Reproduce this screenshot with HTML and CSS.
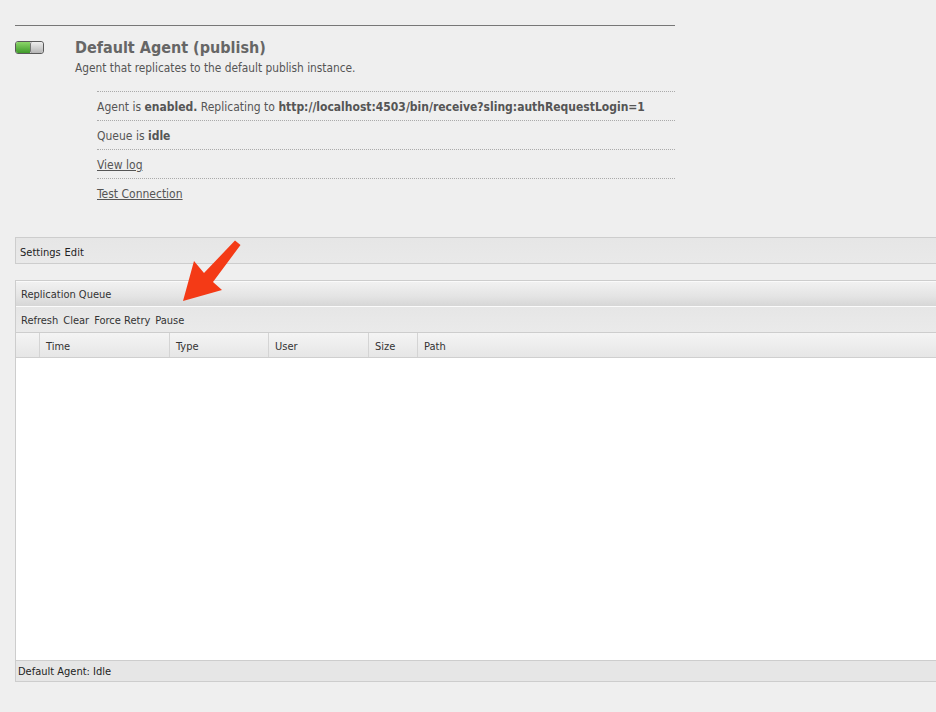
FILE: index.html
```html
<!DOCTYPE html>
<html>
<head>
<meta charset="utf-8">
<link rel="stylesheet" href="styles.css">
</head>
<body>
<div class="page">
  <section class="agent">
    <div class="agent-head">
      <span class="toggle"><span class="toggle-on"></span><span class="toggle-off"></span></span>
      <div class="agent-titles">
        <h1 class="agent-title">Default Agent (publish)</h1>
        <p class="agent-desc">Agent that replicates to the default publish instance.</p>
      </div>
    </div>
    <ul class="agent-info">
      <li>Agent is <b>enabled.</b> Replicating to <b>http://localhost:4503/bin/receive?sling:authRequestLogin=1</b></li>
      <li>Queue is <b>idle</b></li>
      <li><a href="#">View log</a></li>
      <li><a href="#">Test Connection</a></li>
    </ul>
  </section>

  <div class="panel settings">
    <span class="tb-item">Settings</span><span class="tb-item">Edit</span>
  </div>

  <div class="panel queue">
    <div class="queue-header">Replication Queue</div>
    <div class="queue-toolbar">
      <span class="tb-item">Refresh</span><span class="tb-item">Clear</span><span class="tb-item">Force Retry</span><span class="tb-item">Pause</span>
    </div>
    <div class="grid-head">
      <div class="col col-num"></div>
      <div class="col col-time">Time</div>
      <div class="col col-type">Type</div>
      <div class="col col-user">User</div>
      <div class="col col-size">Size</div>
      <div class="col col-path">Path</div>
    </div>
    <div class="grid-body"></div>
    <div class="status">Default Agent: Idle</div>
  </div>
</div>

<svg class="arrow" width="80" height="80" viewBox="170 230 80 80">
  <polygon points="235,240.5 240.5,245 213,282 222,290 183,301 194,261 204,273" fill="#f43a16"/>
</svg>
</body>
</html>
```

FILE: styles.css
```css
html, body {
  margin: 0;
  padding: 0;
  background: #efefef;
  overflow: hidden;
}

body {
  font-family: "DejaVu Sans Condensed", "DejaVu Sans", sans-serif;
  font-stretch: condensed;
  color: #555;
  width: 936px;
  height: 712px;
  position: relative;
}

.page {
  padding-top: 25px;
}

.agent {
  margin-left: 15px;
  width: 660px;
  border-top: 1px solid #777;
  padding-top: 11px;
}

.agent-head {
  display: flex;
  align-items: flex-start;
}

.toggle {
  display: flex;
  width: 27px;
  height: 11px;
  margin-top: 4px;
  border: 1px solid #5a5a5a;
  border-radius: 3px;
  overflow: hidden;
  flex: none;
}

.toggle-on {
  width: 14px;
  background: linear-gradient(#8cd66a, #3f9a2a);
}

.toggle-off {
  flex: 1;
  border-left: 1px solid #777;
  border-radius: 2px;
  background: linear-gradient(#eee, #b5b5b5);
}

.agent-titles {
  margin-left: 31px;
}

.agent-title {
  margin: 0;
  font-size: 16px;
  line-height: 22px;
  font-weight: bold;
  color: #666;
}

.agent-desc {
  margin: 0;
  font-size: 11.8px;
  line-height: 18px;
  color: #555;
}

.agent-info {
  list-style: none;
  margin: 14px 0 0 82px;
  padding: 0;
}

.agent-info li {
  border-top: 1px dotted #aaa;
  height: 28px;
  line-height: 30px;
  font-size: 12px;
  color: #555;
}

.agent-info li b {
  color: #555;
}

.agent-info a {
  color: #555;
  text-decoration: underline;
}

.panel {
  margin-left: 15px;
  margin-right: -20px;
  border: 1px solid #cdcdcd;
  border-right: none;
  font-size: 11px;
  color: #222;
}

.settings {
  margin-top: 30px;
  height: 25px;
  line-height: 30px;
  padding-left: 4px;
  background: linear-gradient(#e6e6e6, #e9e9e9);
}

.tb-item {
  margin-right: 4px;
}

.queue {
  margin-top: 16px;
}

.queue-header {
  height: 24px;
  line-height: 26px;
  padding-left: 5px;
  border-top: 1px solid #fafafa;
  background: linear-gradient(#f1f1f1, #e4e4e4 60%, #d6d6d6);
  color: #333;
}

.queue-toolbar {
  height: 25px;
  line-height: 28px;
  padding-left: 5px;
  border-top: 1px solid #fbfbfb;
  border-bottom: 1px solid #cdcdcd;
  background: linear-gradient(#e6e6e6, #eaeaea);
  color: #333;
}

.queue-toolbar .tb-item {
  margin-right: 5px;
}

.grid-head {
  display: flex;
  height: 24px;
  border-bottom: 1px solid #cfcfcf;
  background: linear-gradient(#f4f4f4, #e6e6e6);
}

.col {
  line-height: 28px;
  padding-left: 6px;
  border-left: 1px solid #d4d4d4;
  color: #333;
  box-sizing: border-box;
}

.col-num {
  width: 23px;
  border-left: none;
}

.col-time { width: 130px; }
.col-type { width: 99px; }
.col-user { width: 100px; }
.col-size { width: 49px; }
.col-path { flex: 1; }

.grid-body {
  height: 302px;
  background: #fff;
  border-bottom: 1px solid #cdcdcd;
}

.status {
  height: 20px;
  line-height: 22px;
  padding-left: 2px;
  background: #e6e6e6;
  color: #222;
}

.arrow {
  position: absolute;
  left: 170px;
  top: 230px;
}
```
